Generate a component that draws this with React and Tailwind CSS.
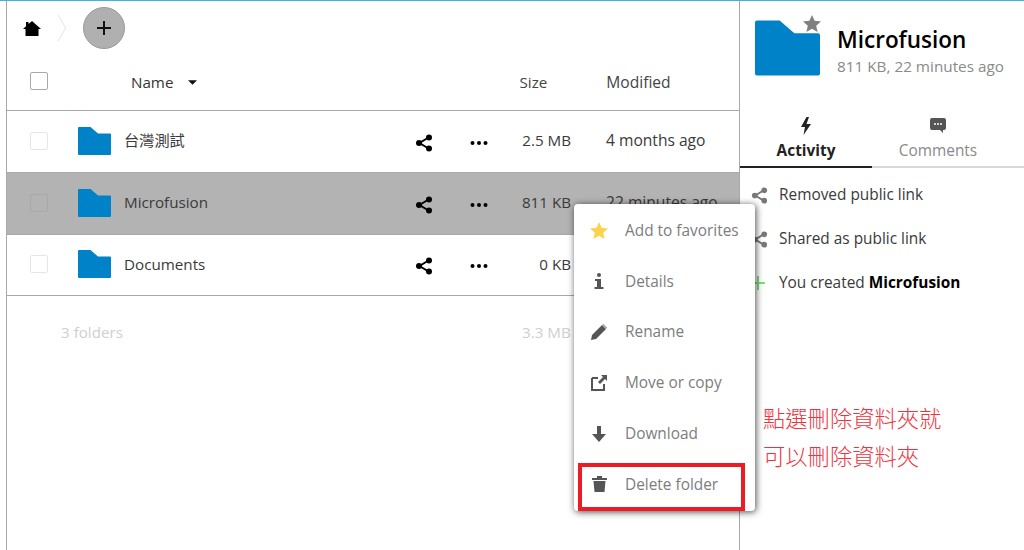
import React from "react";

const font = { fontFamily: '"Open Sans", "Noto Sans CJK TC", sans-serif' };

function Folder({ className }) {
  return (
    <svg viewBox="0 0 33 28" className={className}>
      <path
        d="M1 0h11.5l7.5 6.5h12a1 1 0 0 1 1 1V27a1 1 0 0 1-1 1H1a1 1 0 0 1-1-1V1a1 1 0 0 1 1-1z"
        fill="#0082c9"
      />
    </svg>
  );
}

function Share({ className }) {
  return (
    <svg viewBox="0 0 18 18" className={className}>
      <path d="M13.5 3.5L4.5 9l9 5.5" stroke="currentColor" strokeWidth="2" fill="none" />
      <circle cx="14" cy="3.5" r="3" fill="currentColor" />
      <circle cx="4" cy="9" r="3" fill="currentColor" />
      <circle cx="14" cy="14.5" r="3" fill="currentColor" />
    </svg>
  );
}

function Dots() {
  return (
    <svg viewBox="0 0 18 4" className="w-[18px] h-1 text-black">
      <circle cx="2.5" cy="2" r="2" fill="currentColor" />
      <circle cx="9" cy="2" r="2" fill="currentColor" />
      <circle cx="15.5" cy="2" r="2" fill="currentColor" />
    </svg>
  );
}

function FileRow({ name, size, modified, selected, height }) {
  return (
    <div
      className={`flex items-center pb-[2px] ${height} border-b border-[#a8a8a8] ${selected ? "bg-[#b3b3b3]" : "bg-white"}`}
    >
      <div
        className={`ml-[23px] w-[18px] h-[18px] rounded-[2px] border ${selected ? "border-[#a9a9a9]" : "border-[#e6e6e6]"}`}
      />
      <Folder className="ml-[30px] w-[33px] h-[28px]" />
      <span className="ml-[13px] w-[291px] text-[15.2px] text-[#3a3a3a]">{name}</span>
      <Share className="mt-[4px] w-[18px] h-[18px] text-black" />
      <div className="ml-[37px] mt-[4px]">
        <Dots />
      </div>
      <span className="w-[83px] text-right text-[15.2px] text-[#3a3a3a]">{size}</span>
      <span className="ml-[35px] text-[15.6px] text-[#3a3a3a] whitespace-nowrap">{modified}</span>
    </div>
  );
}

function MenuItem({ icon, label }) {
  return (
    <div className="flex items-center h-[50.8px]">
      <div className="w-[51px] pr-[1px] flex justify-center">{icon}</div>
      <span className="text-[15.4px] text-[#7d7d7d] whitespace-nowrap">{label}</span>
    </div>
  );
}

function ActivityRow({ icon, children }) {
  return (
    <div className="flex items-center h-[44px]">
      <div className="w-[39px] pl-[11px]">{icon}</div>
      <span className="text-[15.4px] text-[#3a3a3a]">{children}</span>
    </div>
  );
}

export default function App() {
  return (
    <div className="relative w-[1024px] h-[550px] bg-white overflow-hidden border-t border-[#45aee8]" style={font}>
      <div className="flex h-full pl-[6px]">
        {/* file list */}
        <div className="w-[734px] border-l border-r border-[#a8a8a8]">
          <div className="flex items-center h-[54px] pl-[16px]">
            <svg viewBox="0 0 18 15" className="w-[18px] h-[15px]">
              <path d="M9 0l9 8h-2.5v7h-13V8H0l3-2.7V1h2.5v2.1z" fill="#000" />
            </svg>
            <svg viewBox="0 0 10 30" className="ml-[16px] w-[10px] h-[28px]">
              <path d="M1 1l8 14-8 14" stroke="#e2e2e2" fill="none" />
            </svg>
            <div className="ml-[16px] w-[42px] h-[42px] rounded-full bg-[#b0b0b0] border border-[#9a9a9a] flex items-center justify-center">
              <svg viewBox="0 0 14 14" className="w-[14px] h-[14px]">
                <path d="M7 0v14M0 7h14" stroke="#111" strokeWidth="2" />
              </svg>
            </div>
          </div>
          <div className="flex items-center h-[56px] border-b border-[#a8a8a8]">
            <div className="ml-[23px] -mt-[3px] w-[18px] h-[18px] rounded-[2px] border border-[#a9a9a9]" />
            <span className="ml-[83px] text-[15.2px] text-[#333]">Name</span>
            <svg viewBox="0 0 10 5" className="ml-[15px] w-[9px] h-[5px]">
              <path d="M0 0h10L5 5z" fill="#111" />
            </svg>
            <span className="ml-[322px] text-[15.2px] text-[#444]">Size</span>
            <span className="ml-[59px] text-[15.6px] text-[#444]">Modified</span>
          </div>
          <FileRow height="h-[62px]" name="台灣測試" size="2.5 MB" modified="4 months ago" />
          <FileRow height="h-[62px]" name="Microfusion" size="811 KB" modified="22 minutes ago" selected />
          <FileRow height="h-[61px]" name="Documents" size="0 KB" modified="" />
          <div className="flex items-center h-[72px] text-[15.2px] text-[#cfcfcf]">
            <span className="ml-[54px] w-[461px]">3 folders</span>
            <span>3.3 MB</span>
          </div>
        </div>

        {/* details sidebar */}
        <div className="flex-1">
          <div className="flex items-start h-[112px] pt-[19px] pl-[15px]">
            <div className="relative w-[65px] h-[56px]">
              <Folder className="w-[65px] h-[56px]" />
              <svg viewBox="0 0 18 17" className="absolute -top-[5px] -right-[1px] w-[18px] h-[17px]">
                <path d="M9 0l2.6 5.8 6.4.7-4.8 4.2 1.4 6.3L9 13.8 3.4 17l1.4-6.3L0 6.5l6.4-.7z" fill="#808080" />
              </svg>
            </div>
            <div className="ml-[17px] pt-[5px]">
              <div className="text-[22.5px] leading-[30px] font-semibold text-black">Microfusion</div>
              <div className="text-[15.3px] leading-[22px] text-[#8a8a8a]">811 KB, 22 minutes ago</div>
            </div>
          </div>
          <div className="flex h-[55px]">
            <div className="w-[132px] flex flex-col items-center border-b-2 border-[#222]">
              <svg viewBox="0 0 12 18" className="mt-[4px] w-[12px] h-[18px]">
                <path d="M6.5 0L1 10h4l-1.5 8L11 7H6.5L9 0z" fill="#222" />
              </svg>
              <span className="mt-[5px] text-[15.4px] leading-[22px] font-bold text-[#222]">Activity</span>
            </div>
            <div className="flex-1 pr-[20px] flex flex-col items-center border-b-2 border-[#d8d8d8]">
              <svg viewBox="0 0 16 15" className="mt-[5px] w-[16px] h-[15px]">
                <path d="M2 0h12a2 2 0 0 1 2 2v8a2 2 0 0 1-2 2h-1v3l-3-3H2a2 2 0 0 1-2-2V2a2 2 0 0 1 2-2z" fill="#555" />
                <circle cx="5" cy="6" r="1" fill="#fff" />
                <circle cx="8" cy="6" r="1" fill="#fff" />
                <circle cx="11" cy="6" r="1" fill="#fff" />
              </svg>
              <span className="mt-[7px] text-[15.4px] leading-[22px] text-[#8a8a8a]">Comments</span>
            </div>
          </div>
          <div className="pt-[5px]">
            <ActivityRow icon={<Share className="w-[17px] h-[17px] text-[#777]" />}>Removed public link</ActivityRow>
            <ActivityRow icon={<Share className="w-[17px] h-[17px] text-[#777]" />}>Shared as public link</ActivityRow>
            <ActivityRow
              icon={
                <svg viewBox="0 0 14 14" className="w-[14px] h-[14px]">
                  <path d="M7 0v14M0 7h14" stroke="#7be07b" strokeWidth="2" />
                </svg>
              }
            >
              You created <b className="text-black">Microfusion</b>
            </ActivityRow>
          </div>
        </div>
      </div>

      {/* context menu */}
      <div className="absolute left-[574px] top-[203px] w-[181px] h-[307px] pt-[1px] bg-white rounded-[4px] shadow-[1px_1px_7px_rgba(0,0,0,0.7)]">
        <MenuItem
          label="Add to favorites"
          icon={
            <svg viewBox="0 0 18 17" className="w-[18px] h-[17px]">
              <path d="M9 0l2.6 5.8 6.4.7-4.8 4.2 1.4 6.3L9 13.8 3.4 17l1.4-6.3L0 6.5l6.4-.7z" fill="#fcd34d" />
            </svg>
          }
        />
        <MenuItem
          label="Details"
          icon={
            <svg viewBox="0 0 10 16" className="w-[10px] h-[16px]">
              <circle cx="5" cy="2" r="2" fill="#555" />
              <path d="M1 6h6v8h2.5v2H.5v-2H3V8H1z" fill="#555" />
            </svg>
          }
        />
        <MenuItem
          label="Rename"
          icon={
            <svg viewBox="0 0 16 16" className="w-[16px] h-[16px]">
              <path d="M0 16l1-5L11 1l4 4L5 15zM12 0l4 4-.5.5-4-4z" fill="#555" />
            </svg>
          }
        />
        <MenuItem
          label="Move or copy"
          icon={
            <svg viewBox="0 0 16 16" className="w-[16px] h-[16px]">
              <path d="M1 3h6M1 3v12h12V9" stroke="#555" strokeWidth="2" fill="none" />
              <path d="M10 0h6v6l-2-2-5 5-2-2 5-5z" fill="#555" />
            </svg>
          }
        />
        <MenuItem
          label="Download"
          icon={
            <svg viewBox="0 0 16 16" className="w-[16px] h-[16px]">
              <path d="M6 0h4v8h5l-7 8-7-8h5z" fill="#555" />
            </svg>
          }
        />
        <MenuItem
          label="Delete folder"
          icon={
            <svg viewBox="0 0 15 16" className="w-[15px] h-[16px]">
              <path d="M0 2h5V0h5v2h5v2H0zM1.5 5h12L12.5 16h-10z" fill="#555" />
            </svg>
          }
        />
      </div>

      {/* annotation */}
      <div className="absolute left-[578px] top-[462px] w-[167px] h-[48px] border-[4px] border-[#ed1c24]" />
      <div className="absolute left-[763px] top-[397px] text-[22.3px] leading-[38px] text-[#ee3340] font-light whitespace-nowrap" style={{ fontFamily: '"Noto Sans CJK TC", sans-serif' }}>
        <div>點選刪除資料夾就</div>
        <div>可以刪除資料夾</div>
      </div>
    </div>
  );
}
